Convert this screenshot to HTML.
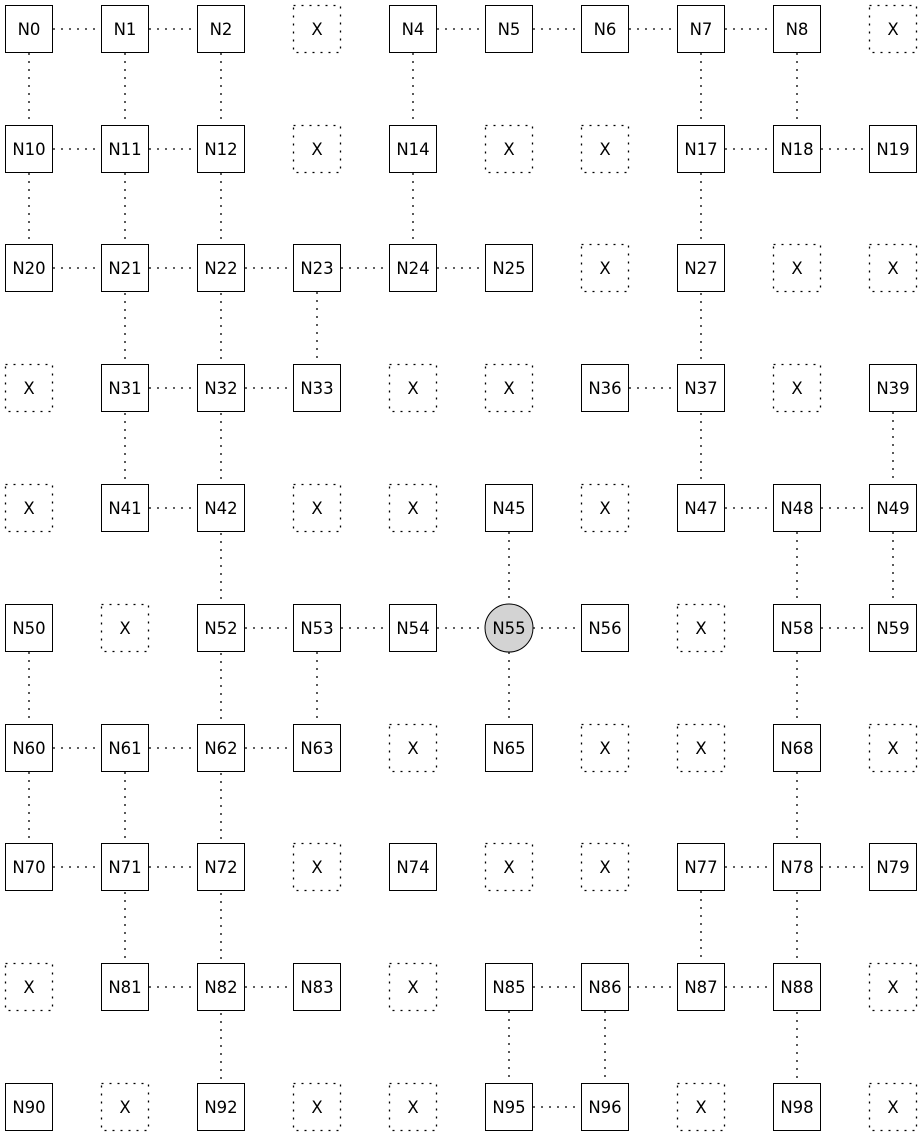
<!DOCTYPE html>
<html><head><meta charset="utf-8"><style>
html,body{margin:0;padding:0;background:#fff;}
svg{display:block;}
text{font-family:"DejaVu Sans","Liberation Sans",sans-serif;font-size:16.5px;text-anchor:middle;fill:#000;}
.e{stroke:#000;stroke-width:1.3;fill:none;stroke-dasharray:2,6;}
.n{fill:#fff;stroke:#000;stroke-width:1;}
.x{fill:#fff;stroke:#000;stroke-width:1.3;stroke-dasharray:2,6;}
</style></head><body>
<svg width="923" height="1139" viewBox="0 0 923 1139" xmlns="http://www.w3.org/2000/svg">
<path class="e" d="M29 29H221M413 29H797M29 149H221M701 149H893M29 268H509M125 388H317M605 388H701M125 508H221M701 508H893M221 628H605M797 628H893M29 748H317M29 867H221M701 867H893M125 987H317M509 987H797M509 1107H605M29 29V268M29 628V867M125 29V508M125 748V987M221 29V1107M317 268V388M317 628V748M413 29V268M509 508V748M509 987V1107M605 987V1107M701 29V508M701 867V987M797 29V149M797 508V1107M893 388V628"/>
<g>
<rect class="n" x="5.5" y="5.5" width="47" height="47"/><text x="29" y="35">N0</text>
<rect class="n" x="101.5" y="5.5" width="47" height="47"/><text x="125" y="35">N1</text>
<rect class="n" x="197.5" y="5.5" width="47" height="47"/><text x="221" y="35">N2</text>
<rect class="x" x="293.5" y="5.5" width="47" height="47"/><text x="317" y="35">X</text>
<rect class="n" x="389.5" y="5.5" width="47" height="47"/><text x="413" y="35">N4</text>
<rect class="n" x="485.5" y="5.5" width="47" height="47"/><text x="509" y="35">N5</text>
<rect class="n" x="581.5" y="5.5" width="47" height="47"/><text x="605" y="35">N6</text>
<rect class="n" x="677.5" y="5.5" width="47" height="47"/><text x="701" y="35">N7</text>
<rect class="n" x="773.5" y="5.5" width="47" height="47"/><text x="797" y="35">N8</text>
<rect class="x" x="869.5" y="5.5" width="47" height="47"/><text x="893" y="35">X</text>
<rect class="n" x="5.5" y="125.5" width="47" height="47"/><text x="29" y="155">N10</text>
<rect class="n" x="101.5" y="125.5" width="47" height="47"/><text x="125" y="155">N11</text>
<rect class="n" x="197.5" y="125.5" width="47" height="47"/><text x="221" y="155">N12</text>
<rect class="x" x="293.5" y="125.5" width="47" height="47"/><text x="317" y="155">X</text>
<rect class="n" x="389.5" y="125.5" width="47" height="47"/><text x="413" y="155">N14</text>
<rect class="x" x="485.5" y="125.5" width="47" height="47"/><text x="509" y="155">X</text>
<rect class="x" x="581.5" y="125.5" width="47" height="47"/><text x="605" y="155">X</text>
<rect class="n" x="677.5" y="125.5" width="47" height="47"/><text x="701" y="155">N17</text>
<rect class="n" x="773.5" y="125.5" width="47" height="47"/><text x="797" y="155">N18</text>
<rect class="n" x="869.5" y="125.5" width="47" height="47"/><text x="893" y="155">N19</text>
<rect class="n" x="5.5" y="244.5" width="47" height="47"/><text x="29" y="274">N20</text>
<rect class="n" x="101.5" y="244.5" width="47" height="47"/><text x="125" y="274">N21</text>
<rect class="n" x="197.5" y="244.5" width="47" height="47"/><text x="221" y="274">N22</text>
<rect class="n" x="293.5" y="244.5" width="47" height="47"/><text x="317" y="274">N23</text>
<rect class="n" x="389.5" y="244.5" width="47" height="47"/><text x="413" y="274">N24</text>
<rect class="n" x="485.5" y="244.5" width="47" height="47"/><text x="509" y="274">N25</text>
<rect class="x" x="581.5" y="244.5" width="47" height="47"/><text x="605" y="274">X</text>
<rect class="n" x="677.5" y="244.5" width="47" height="47"/><text x="701" y="274">N27</text>
<rect class="x" x="773.5" y="244.5" width="47" height="47"/><text x="797" y="274">X</text>
<rect class="x" x="869.5" y="244.5" width="47" height="47"/><text x="893" y="274">X</text>
<rect class="x" x="5.5" y="364.5" width="47" height="47"/><text x="29" y="394">X</text>
<rect class="n" x="101.5" y="364.5" width="47" height="47"/><text x="125" y="394">N31</text>
<rect class="n" x="197.5" y="364.5" width="47" height="47"/><text x="221" y="394">N32</text>
<rect class="n" x="293.5" y="364.5" width="47" height="47"/><text x="317" y="394">N33</text>
<rect class="x" x="389.5" y="364.5" width="47" height="47"/><text x="413" y="394">X</text>
<rect class="x" x="485.5" y="364.5" width="47" height="47"/><text x="509" y="394">X</text>
<rect class="n" x="581.5" y="364.5" width="47" height="47"/><text x="605" y="394">N36</text>
<rect class="n" x="677.5" y="364.5" width="47" height="47"/><text x="701" y="394">N37</text>
<rect class="x" x="773.5" y="364.5" width="47" height="47"/><text x="797" y="394">X</text>
<rect class="n" x="869.5" y="364.5" width="47" height="47"/><text x="893" y="394">N39</text>
<rect class="x" x="5.5" y="484.5" width="47" height="47"/><text x="29" y="514">X</text>
<rect class="n" x="101.5" y="484.5" width="47" height="47"/><text x="125" y="514">N41</text>
<rect class="n" x="197.5" y="484.5" width="47" height="47"/><text x="221" y="514">N42</text>
<rect class="x" x="293.5" y="484.5" width="47" height="47"/><text x="317" y="514">X</text>
<rect class="x" x="389.5" y="484.5" width="47" height="47"/><text x="413" y="514">X</text>
<rect class="n" x="485.5" y="484.5" width="47" height="47"/><text x="509" y="514">N45</text>
<rect class="x" x="581.5" y="484.5" width="47" height="47"/><text x="605" y="514">X</text>
<rect class="n" x="677.5" y="484.5" width="47" height="47"/><text x="701" y="514">N47</text>
<rect class="n" x="773.5" y="484.5" width="47" height="47"/><text x="797" y="514">N48</text>
<rect class="n" x="869.5" y="484.5" width="47" height="47"/><text x="893" y="514">N49</text>
<rect class="n" x="5.5" y="604.5" width="47" height="47"/><text x="29" y="634">N50</text>
<rect class="x" x="101.5" y="604.5" width="47" height="47"/><text x="125" y="634">X</text>
<rect class="n" x="197.5" y="604.5" width="47" height="47"/><text x="221" y="634">N52</text>
<rect class="n" x="293.5" y="604.5" width="47" height="47"/><text x="317" y="634">N53</text>
<rect class="n" x="389.5" y="604.5" width="47" height="47"/><text x="413" y="634">N54</text>
<circle cx="509" cy="628" r="24" fill="#d3d3d3" stroke="#000"/><text x="509" y="634">N55</text>
<rect class="n" x="581.5" y="604.5" width="47" height="47"/><text x="605" y="634">N56</text>
<rect class="x" x="677.5" y="604.5" width="47" height="47"/><text x="701" y="634">X</text>
<rect class="n" x="773.5" y="604.5" width="47" height="47"/><text x="797" y="634">N58</text>
<rect class="n" x="869.5" y="604.5" width="47" height="47"/><text x="893" y="634">N59</text>
<rect class="n" x="5.5" y="724.5" width="47" height="47"/><text x="29" y="754">N60</text>
<rect class="n" x="101.5" y="724.5" width="47" height="47"/><text x="125" y="754">N61</text>
<rect class="n" x="197.5" y="724.5" width="47" height="47"/><text x="221" y="754">N62</text>
<rect class="n" x="293.5" y="724.5" width="47" height="47"/><text x="317" y="754">N63</text>
<rect class="x" x="389.5" y="724.5" width="47" height="47"/><text x="413" y="754">X</text>
<rect class="n" x="485.5" y="724.5" width="47" height="47"/><text x="509" y="754">N65</text>
<rect class="x" x="581.5" y="724.5" width="47" height="47"/><text x="605" y="754">X</text>
<rect class="x" x="677.5" y="724.5" width="47" height="47"/><text x="701" y="754">X</text>
<rect class="n" x="773.5" y="724.5" width="47" height="47"/><text x="797" y="754">N68</text>
<rect class="x" x="869.5" y="724.5" width="47" height="47"/><text x="893" y="754">X</text>
<rect class="n" x="5.5" y="843.5" width="47" height="47"/><text x="29" y="873">N70</text>
<rect class="n" x="101.5" y="843.5" width="47" height="47"/><text x="125" y="873">N71</text>
<rect class="n" x="197.5" y="843.5" width="47" height="47"/><text x="221" y="873">N72</text>
<rect class="x" x="293.5" y="843.5" width="47" height="47"/><text x="317" y="873">X</text>
<rect class="n" x="389.5" y="843.5" width="47" height="47"/><text x="413" y="873">N74</text>
<rect class="x" x="485.5" y="843.5" width="47" height="47"/><text x="509" y="873">X</text>
<rect class="x" x="581.5" y="843.5" width="47" height="47"/><text x="605" y="873">X</text>
<rect class="n" x="677.5" y="843.5" width="47" height="47"/><text x="701" y="873">N77</text>
<rect class="n" x="773.5" y="843.5" width="47" height="47"/><text x="797" y="873">N78</text>
<rect class="n" x="869.5" y="843.5" width="47" height="47"/><text x="893" y="873">N79</text>
<rect class="x" x="5.5" y="963.5" width="47" height="47"/><text x="29" y="993">X</text>
<rect class="n" x="101.5" y="963.5" width="47" height="47"/><text x="125" y="993">N81</text>
<rect class="n" x="197.5" y="963.5" width="47" height="47"/><text x="221" y="993">N82</text>
<rect class="n" x="293.5" y="963.5" width="47" height="47"/><text x="317" y="993">N83</text>
<rect class="x" x="389.5" y="963.5" width="47" height="47"/><text x="413" y="993">X</text>
<rect class="n" x="485.5" y="963.5" width="47" height="47"/><text x="509" y="993">N85</text>
<rect class="n" x="581.5" y="963.5" width="47" height="47"/><text x="605" y="993">N86</text>
<rect class="n" x="677.5" y="963.5" width="47" height="47"/><text x="701" y="993">N87</text>
<rect class="n" x="773.5" y="963.5" width="47" height="47"/><text x="797" y="993">N88</text>
<rect class="x" x="869.5" y="963.5" width="47" height="47"/><text x="893" y="993">X</text>
<rect class="n" x="5.5" y="1083.5" width="47" height="47"/><text x="29" y="1113">N90</text>
<rect class="x" x="101.5" y="1083.5" width="47" height="47"/><text x="125" y="1113">X</text>
<rect class="n" x="197.5" y="1083.5" width="47" height="47"/><text x="221" y="1113">N92</text>
<rect class="x" x="293.5" y="1083.5" width="47" height="47"/><text x="317" y="1113">X</text>
<rect class="x" x="389.5" y="1083.5" width="47" height="47"/><text x="413" y="1113">X</text>
<rect class="n" x="485.5" y="1083.5" width="47" height="47"/><text x="509" y="1113">N95</text>
<rect class="n" x="581.5" y="1083.5" width="47" height="47"/><text x="605" y="1113">N96</text>
<rect class="x" x="677.5" y="1083.5" width="47" height="47"/><text x="701" y="1113">X</text>
<rect class="n" x="773.5" y="1083.5" width="47" height="47"/><text x="797" y="1113">N98</text>
<rect class="x" x="869.5" y="1083.5" width="47" height="47"/><text x="893" y="1113">X</text>
</g>
</svg>
</body></html>
